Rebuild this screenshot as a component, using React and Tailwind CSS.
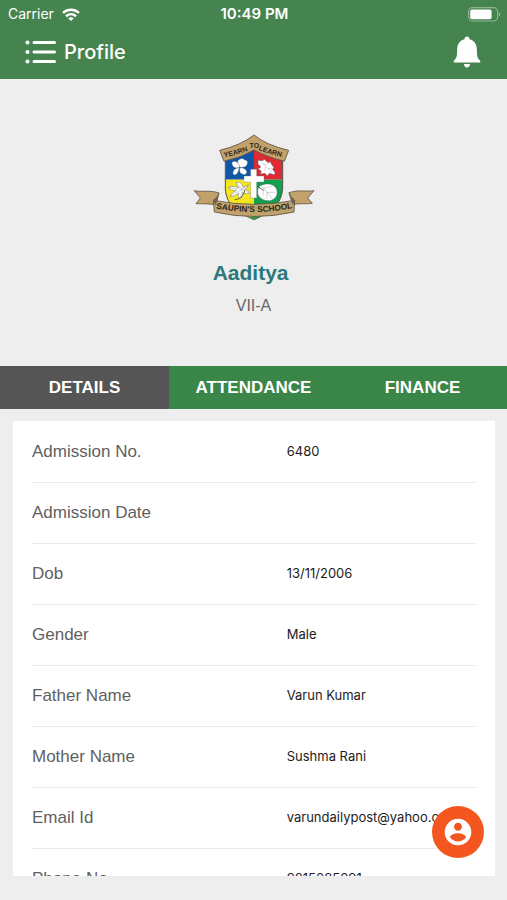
import React, { useState } from 'react';

const details = [
  { label: 'Admission No.', value: '6480' },
  { label: 'Admission Date', value: '' },
  { label: 'Dob', value: '13/11/2006' },
  { label: 'Gender', value: 'Male' },
  { label: 'Father Name', value: 'Varun Kumar' },
  { label: 'Mother Name', value: 'Sushma Rani' },
  { label: 'Email Id', value: 'varundailypost@yahoo.com' },
  { label: 'Phone No.', value: '9815085091' },
];

const tabs = ['DETAILS', 'ATTENDANCE', 'FINANCE'];

const StatusBar = () => (
  <div className="grid grid-cols-3 items-center h-7 pl-2 pr-1.5 text-white">
    <div className="flex items-center gap-2 text-sm">
      Carrier
      <svg viewBox="0 0 18 13" className="w-[18px] h-[13px]" fill="none" stroke="currentColor" strokeWidth="2.5">
        <path d="M1 4.8C5.6.6 12.4.6 17 4.8" />
        <path d="M4 8.2c3-2.6 7-2.6 10 0" />
        <path d="M9 13 6.2 10.2c1.6-1.4 4-1.4 5.6 0z" fill="currentColor" stroke="none" />
      </svg>
    </div>
    <div className="text-center text-[15px] font-semibold whitespace-nowrap">10:49 PM</div>
    <div className="flex justify-end">
      <svg viewBox="0 0 33 15" className="w-[33px] h-[15px]">
        <rect x="0.6" y="0.6" width="29" height="13.4" rx="4" fill="none" stroke="#fff" strokeOpacity="0.4" strokeWidth="1.1" />
        <rect x="2.2" y="2.4" width="21.4" height="9.8" rx="2" fill="#fff" />
        <path d="M31 5.2c1.6.8 1.6 3.4 0 4.2z" fill="#fff" fillOpacity="0.5" />
      </svg>
    </div>
  </div>
);

const SchoolCrest = () => (
  <svg viewBox="0 0 420 315" className="w-[140px] h-[105px]" role="img" aria-label="School crest">
    <defs>
      <clipPath id="shield">
        <path d="M124 90V190C126 240 160 262 210 284C260 262 292 240 296 190V90L210 60Z" />
      </clipPath>
      <path id="motto-left" d="M121 97Q160 90 202 73" />
      <path id="motto-right" d="M223 74Q262 91 310 98" />
      <path id="school" d="M85 248Q210 275 337 247" />
    </defs>

    <g clipPath="url(#shield)">
      <rect x="120" y="50" width="90" height="114" fill="#0d56a8" />
      <rect x="210" y="50" width="90" height="114" fill="#dd2a33" />
      <rect x="120" y="164" width="90" height="125" fill="#f5e51b" />
      <rect x="210" y="164" width="90" height="125" fill="#12a050" />
    </g>
    <path d="M124 90V190C126 240 160 262 210 284C260 262 292 240 296 190V90" fill="none" stroke="#4d5148" strokeWidth="3" />

    {/* leaves, one in each quarter */}
    <g fill="#fff" stroke="#4c5468" strokeWidth="1.2" strokeLinejoin="round">
      <path d="M168 127C160 120 157 106 168 102Q176 98 181 104Q194 106 190 117C188 126 177 128 168 127Z" />
      <path d="M167 127C160 131 147 129 145 120Q141 111 150 109C160 108 165 118 167 127Z" />
      <path d="M166 128C163 139 161 149 151 150Q144 147 148 139C150 131 158 129 166 128Z" />
      <path d="M168 128C179 128 191 134 188 144Q183 153 174 147C166 143 166 136 168 128Z" />
      <path d="M222 106L237 107Q240 98 246 108L255 114L258 108L264 121L270 126L266 133L274 144L270 149L256 145L250 153L243 145L229 147L232 138L222 132L231 126L222 117Z" />
      <path d="M194 180Q184 180 178 188Q172 168 157 173Q158 182 165 188Q145 181 132 187Q143 199 158 196Q143 202 138 215Q151 216 164 204Q160 216 168 223Q179 214 176 202Q186 209 196 205Q194 196 184 193Z" />
      <path d="M231 181C244 175 268 173 277 191C284 207 275 224 257 227C239 228 222 218 221 203C220 192 224 184 231 181Z" />
    </g>
    <g fill="none" stroke="#4c5468" strokeWidth="1" strokeOpacity="0.7">
      <path d="M230 110L265 143M238 118L252 117M245 125L243 139M253 131L265 130" />
      <path d="M135 188L175 193M159 176L175 193M141 212L175 193L168 219M175 193L194 181M175 193L193 203" />
      <path d="M230 178L266 223M239 189L237 212M239 189L265 184M249 202L248 222M249 202L274 202" />
    </g>
    <path d="M183 194C178 215 166 223 152 224" fill="none" stroke="#49503a" strokeWidth="2.5" />
    <path d="M212 177L238 196" fill="none" stroke="#23603a" strokeWidth="2.5" />

    <path d="M200 133H218V153H240V171H218V219H200V171H180V153H200Z" fill="#fff" stroke="#68717b" strokeWidth="1" />

    <path d="M107 76Q170 61 210 30Q248 61 314 76L301 109Q248 96 210 75Q171 98 120 109Z" fill="#c3a16a" stroke="#585044" strokeWidth="2.5" strokeLinejoin="round" />
    <g fontFamily="Liberation Sans, sans-serif" fontSize="21" fontWeight="bold" fill="#282722">
      <text><textPath href="#motto-left">YEARN</textPath></text>
      <text x="211" y="69" textAnchor="middle">TO</text>
      <text><textPath href="#motto-right">LEARN</textPath></text>
    </g>

    <g fill="#c3a16a" stroke="#5d5547" strokeWidth="2.5" strokeLinejoin="round">
      <path d="M31 197C52 202 77 194 105 204L96 240C76 235 57 237 36 236L49 219Z" />
      <path d="M390 197C366 201 345 193 315 203L326 239C345 234 363 238 385 235L371 219Z" />
      <path d="M88 226Q210 250 332 226L330 261Q210 288 91 261Z" />
    </g>
    <path d="M105 204L101 214L88 226L96 240M315 203L320 214L332 226L326 239" fill="#75614a" stroke="#5d5547" strokeWidth="2" />
    <path d="M195 275Q210 277 225 275L210 285Z" fill="#31994a" />
    <text fontFamily="Liberation Sans, sans-serif" fontSize="25" fontWeight="bold" fill="#282722" textAnchor="middle">
      <textPath href="#school" startOffset="50%">SAUPIN'S SCHOOL</textPath>
    </text>
  </svg>
);

const Header = () => (
  <header className="bg-[#46844f] h-[79px] shrink-0 text-white">
    <StatusBar />
    <div className="flex items-center justify-between h-12 px-6">
      <div className="flex items-center gap-2">
        <button aria-label="Menu">
          <svg viewBox="0 0 32 24" className="block w-8 h-6" fill="none" stroke="currentColor" strokeWidth="3" strokeLinecap="round">
            <path d="M10 2.5H30.5M10 12H30.5M10 21.5H30.5" />
            <path d="M3.4 2.5H3.5M3.4 12H3.5M3.4 21.5H3.5" strokeWidth="4" />
          </svg>
        </button>
        <h1 className="text-xl font-medium">Profile</h1>
      </div>
      <button aria-label="Notifications">
        <svg viewBox="0 0 32 32" className="block w-8 h-8" fill="currentColor">
          <path d="M16 .6C14.5.6 13.5 1.6 13.5 3.2C9 4.3 6.4 8 6.2 12.5C6 20 6 22.1 2.8 24.6V26.6H29.2V24.6C26 22.1 26 20 25.8 12.5C25.6 8 23 4.3 18.5 3.2C18.5 1.6 17.5.6 16 .6Z" />
          <path d="M12.9 28H19.1C18.8 30.2 17.7 31.4 16 31.4C14.3 31.4 13.2 30.2 12.9 28Z" />
        </svg>
      </button>
    </div>
  </header>
);

const App = () => {
  const [activeTab, setActiveTab] = useState('DETAILS');

  return (
    <div className="relative flex flex-col h-screen bg-[#eeeeee] font-['Inter',sans-serif]">
      <Header />

      <section className="flex flex-col items-center shrink-0 pt-[46px] pb-12 font-['Liberation_Sans',sans-serif]">
        <SchoolCrest />
        <h2 className="mt-7 text-[21px] leading-[30px] font-bold text-[#2b787d] whitespace-pre">{'Aaditya '}</h2>
        <p className="mt-1.5 text-base text-[#666666]">VII-A</p>
      </section>

      <nav className="grid grid-cols-3 shrink-0 h-[43px] font-['Liberation_Sans',sans-serif]">
        {tabs.map((tab) => (
          <button
            key={tab}
            onClick={() => setActiveTab(tab)}
            className={`text-[17px] font-bold text-white ${activeTab === tab ? 'bg-[#555555]' : 'bg-[#3a8548]'}`}
          >
            {tab}
          </button>
        ))}
      </nav>

      <main className="flex-1 min-h-0 ml-[13px] mr-3 mt-3 mb-6 px-[19px] bg-white overflow-x-hidden overflow-y-auto [scrollbar-width:none]">
        <table className="w-full table-fixed">
          <tbody>
            {details.map(({ label, value }) => (
              <tr key={label} className="h-[61px] border-b border-[#ebebeb]">
                <th scope="row" className="w-4/7 text-left text-[17px] font-normal text-[#5f5f5f] font-['Liberation_Sans',sans-serif]">
                  {label}
                </th>
                <td className="pl-px text-[13px] text-[#1c1c1c] whitespace-nowrap">{value}</td>
              </tr>
            ))}
          </tbody>
        </table>
      </main>

      <button
        aria-label="Account"
        className="absolute right-[23px] bottom-[42px] flex items-center justify-center size-[52px] rounded-full bg-[#f4561f] text-white"
      >
        <svg viewBox="0 0 24 24" className="size-8" fill="currentColor">
          <path d="M12 2C6.48 2 2 6.48 2 12s4.48 10 10 10 10-4.48 10-10S17.52 2 12 2zm0 3c1.66 0 3 1.34 3 3s-1.34 3-3 3-3-1.34-3-3 1.34-3 3-3zm0 14.2c-2.5 0-4.71-1.28-6-3.22.03-1.99 4-3.08 6-3.08 1.99 0 5.97 1.09 6 3.08-1.29 1.94-3.5 3.22-6 3.22z" />
        </svg>
      </button>
    </div>
  );
};

export default App;
